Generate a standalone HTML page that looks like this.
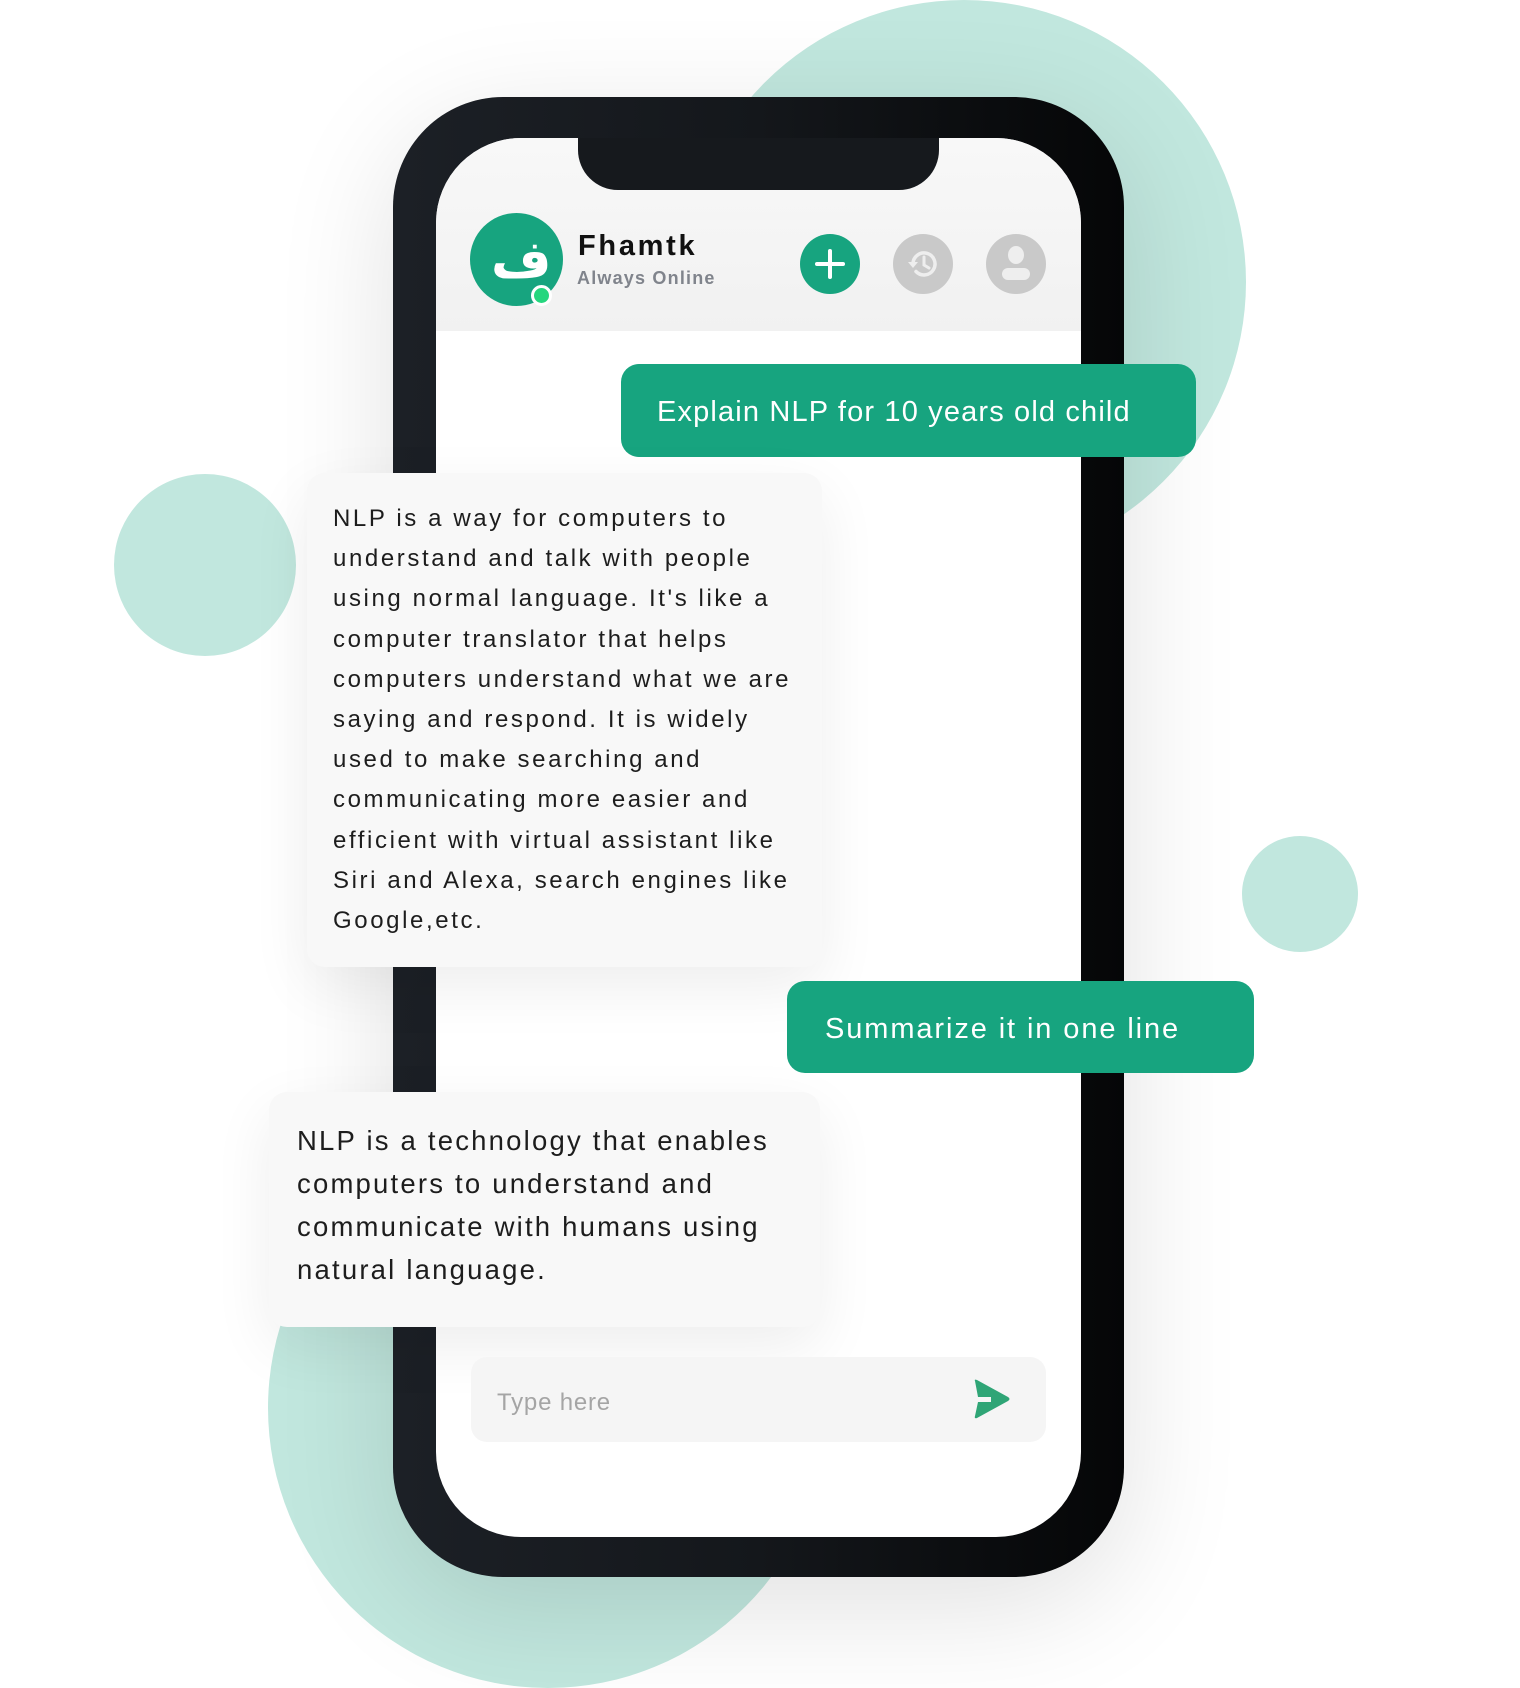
<!DOCTYPE html>
<html><head><meta charset="utf-8"><style>
*{margin:0;padding:0;box-sizing:border-box}
body{width:1520px;height:1680px;background:#fff;position:relative;overflow:hidden;font-family:"Liberation Sans",sans-serif}
.c{position:absolute;border-radius:50%;background:#c1e7de}
.phone{position:absolute;left:393px;top:97px;width:731px;height:1480px;border-radius:110px;background:linear-gradient(90deg,#1c2026,#14171b 50%,#050607);box-shadow:0 30px 120px rgba(0,0,0,.12)}
.screen{position:absolute;left:436px;top:138px;width:645px;height:1399px;border-radius:85px;background:#fff;overflow:hidden}
.hdr{position:absolute;left:0;top:0;width:645px;height:193px;background:linear-gradient(#f8f8f8,#f1f1f1)}
.notch{position:absolute;left:578px;top:138px;width:361px;height:52px;background:#16191d;border-radius:0 0 40px 40px}
.b{position:absolute;border-radius:18px}
.g{background:#17a47f;color:#fff;font-size:29px;letter-spacing:1.15px;padding-left:36px;display:flex;align-items:center;padding-top:4px}
.w{background:#f8f8f8;color:#1d1d1d;box-shadow:0 20px 60px rgba(0,0,0,.07)}
</style></head><body>
<div class="c" style="left:682px;top:0;width:564px;height:564px"></div>
<div class="c" style="left:114px;top:474px;width:182px;height:182px"></div>
<div class="c" style="left:1242px;top:836px;width:116px;height:116px"></div>
<div class="c" style="left:268px;top:1128px;width:560px;height:560px"></div>
<div class="phone"></div>
<div class="screen"><div class="hdr"></div></div>
<div class="notch"></div>
<div class="c" style="left:470px;top:213px;width:93px;height:93px;background:#17a47f"></div>
<div style="position:absolute;left:491px;top:230px;color:#fff;font-size:52px;font-weight:bold;font-family:'DejaVu Sans',sans-serif">ف</div>
<div class="c" style="left:531px;top:285px;width:21px;height:21px;background:#25d67e;border:3px solid #fff"></div>
<div style="position:absolute;left:578px;top:230px;font-size:29px;font-weight:bold;letter-spacing:2.7px;color:#111">Fhamtk</div>
<div style="position:absolute;left:577px;top:268px;font-size:18px;font-weight:bold;letter-spacing:1.2px;color:#80848c">Always Online</div>
<div class="c" style="left:800px;top:234px;width:60px;height:60px;background:#17a47f"></div>
<div style="position:absolute;left:815px;top:262px;width:30px;height:4px;background:#fff;border-radius:2px"></div>
<div style="position:absolute;left:828px;top:249px;width:4px;height:30px;background:#fff;border-radius:2px"></div>
<div class="c" style="left:893px;top:234px;width:60px;height:60px;background:#c9c9c9"></div>
<svg style="position:absolute;left:906px;top:247px" width="34" height="34" viewBox="0 0 34 34"><path d="M7 17a11 11 0 1 1 3 7.5" fill="none" stroke="#eee" stroke-width="3.5" stroke-linecap="round"/><path d="M2 15l5 6 5-6z" fill="#eee"/><path d="M18 10v8l5 3" fill="none" stroke="#eee" stroke-width="3" stroke-linecap="round"/></svg>
<div class="c" style="left:986px;top:234px;width:60px;height:60px;background:#c9c9c9"></div>
<div class="c" style="left:1008px;top:246px;width:16px;height:18px;background:#eee"></div>
<div style="position:absolute;left:1002px;top:268px;width:28px;height:12px;background:#eee;border-radius:7px"></div>
<div class="b g" style="left:621px;top:364px;width:575px;height:93px">Explain NLP for 10 years old child</div>
<div class="b w" style="left:307px;top:473px;width:515px;height:494px;padding:26px 0 0 26px;font-size:24px;line-height:40.2px;letter-spacing:2.6px;white-space:nowrap">NLP is a way for computers to<br>understand and talk with people<br>using normal language. It's like a<br>computer translator that helps<br>computers understand what we are<br>saying and respond. It is widely<br>used to make searching and<br>communicating more easier and<br>efficient with virtual assistant like<br>Siri and Alexa, search engines like<br>Google,etc.</div>
<div class="b g" style="left:787px;top:981px;width:467px;height:92px;padding-left:38px;letter-spacing:1.9px">Summarize it in one line</div>
<div class="b w" style="left:269px;top:1092px;width:551px;height:235px;padding:27px 0 0 28px;font-size:27.5px;line-height:43px;letter-spacing:2.2px;white-space:nowrap">NLP is a technology that enables<br>computers to understand and<br>communicate with humans using<br>natural language.</div>
<div class="b" style="left:471px;top:1357px;width:575px;height:85px;background:#f5f5f5;border-radius:16px"></div>
<div style="position:absolute;left:497px;top:1389px;font-size:24px;color:#a5a5a5;letter-spacing:.8px">Type here</div>
<svg style="position:absolute;left:971px;top:1378px" width="42" height="42" viewBox="0 0 42 42"><path d="M4 3Q3 1 6 2L37 19Q40 21 37 23L6 40Q3 41 4 38L7 24H20V19H7Z" fill="#2fa576"/></svg>
</body></html>
